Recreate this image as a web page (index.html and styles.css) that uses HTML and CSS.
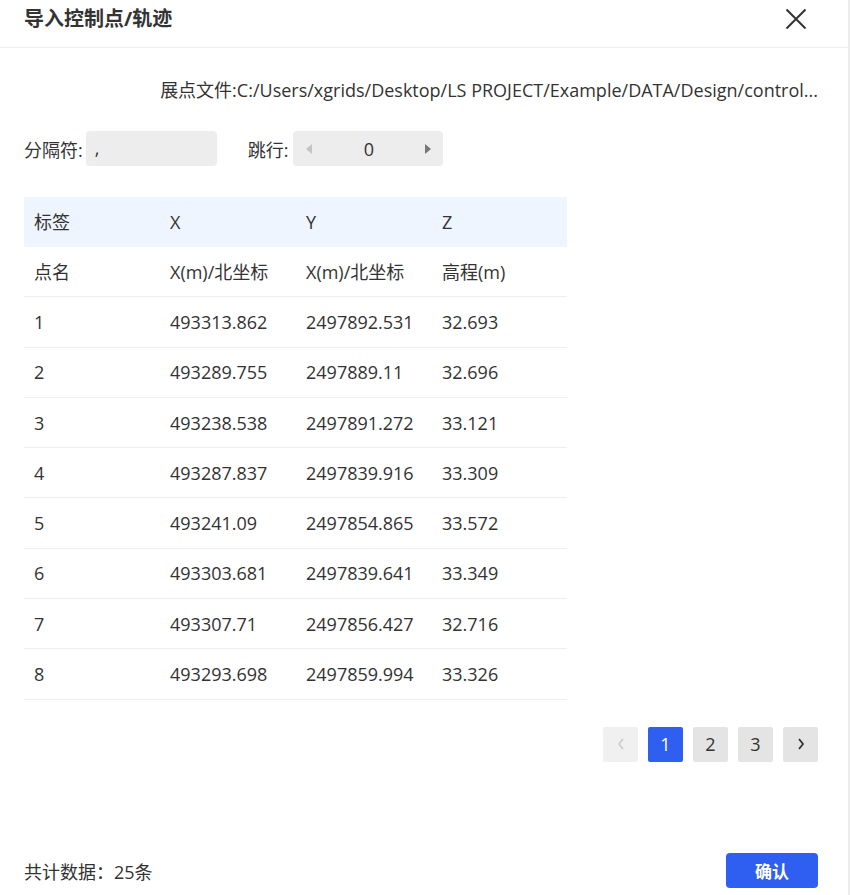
FILE: index.html
```html
<!DOCTYPE html>
<html lang="zh-CN">
<head>
    <meta charset="UTF-8">
    <title>导入控制点/轨迹</title>
    <link rel="stylesheet" href="styles.css">
</head>
<body>
<div class="dialog">
    <div class="dialog-header">
        <h1>导入控制点/轨迹</h1>
        <button type="button" class="close-btn" aria-label="关闭">
            <svg width="22" height="22" viewBox="0 0 22 22"><path d="M1.5 1.5L20.5 20.5M20.5 1.5L1.5 20.5" stroke="#333" stroke-width="2" fill="none"/></svg>
        </button>
    </div>
    <div class="dialog-body">
        <div class="file-path">展点文件:C:/Users/xgrids/Desktop/LS PROJECT/Example/DATA/Design/control...</div>
        <div class="options-row">
            <label class="field">分隔符: <span class="sep-input">,</span></label>
            <label class="field field-skip">跳行:
                <span class="stepper">
                    <span class="arrow arrow-left"></span>
                    <span class="stepper-value">0</span>
                    <span class="arrow arrow-right"></span>
                </span>
            </label>
        </div>
        <table class="data-table">
            <thead>
                <tr><th>标签</th><th>X</th><th>Y</th><th>Z</th></tr>
            </thead>
            <tbody>
                <tr><td>点名</td><td>X(m)/北坐标</td><td>X(m)/北坐标</td><td>高程(m)</td></tr>
                <tr><td>1</td><td>493313.862</td><td>2497892.531</td><td>32.693</td></tr>
                <tr><td>2</td><td>493289.755</td><td>2497889.11</td><td>32.696</td></tr>
                <tr><td>3</td><td>493238.538</td><td>2497891.272</td><td>33.121</td></tr>
                <tr><td>4</td><td>493287.837</td><td>2497839.916</td><td>33.309</td></tr>
                <tr><td>5</td><td>493241.09</td><td>2497854.865</td><td>33.572</td></tr>
                <tr><td>6</td><td>493303.681</td><td>2497839.641</td><td>33.349</td></tr>
                <tr><td>7</td><td>493307.71</td><td>2497856.427</td><td>32.716</td></tr>
                <tr><td>8</td><td>493293.698</td><td>2497859.994</td><td>33.326</td></tr>
            </tbody>
        </table>
        <div class="pager">
            <button type="button" class="page-btn disabled">
                <svg width="10" height="14" viewBox="0 0 10 14"><path d="M7 2L3 7L7 12" stroke="#c8c8c8" stroke-width="1.5" fill="none"/></svg>
            </button>
            <button type="button" class="page-btn active">1</button>
            <button type="button" class="page-btn">2</button>
            <button type="button" class="page-btn">3</button>
            <button type="button" class="page-btn">
                <svg width="10" height="14" viewBox="0 0 10 14"><path d="M3 2L7 7L3 12" stroke="#333" stroke-width="1.8" fill="none"/></svg>
            </button>
        </div>
    </div>
    <div class="dialog-footer">
        <span class="total">共计数据：25条</span>
        <button type="button" class="confirm-btn">确认</button>
    </div>
</div>
</body>
</html>
```

FILE: styles.css
```css
html, body { margin: 0; padding: 0; background: #fff; }
body { font-family: "Open Sans", "Noto Sans CJK SC", sans-serif; color: #333; font-size: 18px; }
.dialog { width: 848px; height: 895px; border-right: 2px solid #ececec; display: flex; flex-direction: column; }
.dialog-header { height: 47px; border-bottom: 1px solid #eeeeee; display: flex; align-items: flex-start; justify-content: space-between; padding: 0 41px 0 24px; }
.dialog-header h1 { margin: 5px 0 0; font-size: 20px; font-weight: bold; color: #333; line-height: 28px; }
.close-btn { background: none; border: 0; padding: 0; margin-top: 8px; cursor: pointer; }
.dialog-body { flex: 1; padding: 0 30px 0 24px; }
.file-path { text-align: right; margin-top: 28px; line-height: 28px; height: 28px; white-space: nowrap; }
.options-row { display: flex; gap: 31px; margin-top: 27px; height: 35px; }
.field { display: flex; align-items: center; gap: 3px; }
.field-skip { gap: 5px; }
.sep-input { width: 131px; height: 35px; background: #ededed; border-radius: 4px; box-sizing: border-box; padding: 0 9px; line-height: 35px; }
.stepper { width: 150px; height: 35px; background: #ededed; border-radius: 4px; display: flex; align-items: center; justify-content: space-between; padding: 0 12px 0 13px; box-sizing: border-box; }
.stepper-value { font-size: 18px; }
.arrow { width: 0; height: 0; border-top: 5px solid transparent; border-bottom: 5px solid transparent; }
.arrow-left { border-right: 6px solid #c4c4c4; }
.arrow-right { border-left: 6px solid #777; }
.data-table { margin-top: 31px; width: 543px; border-collapse: collapse; table-layout: fixed; }
.data-table th, .data-table td { text-align: left; font-weight: normal; padding: 0; height: 49.3px; border-bottom: 1px solid #eeeeee; line-height: 24px; }
.data-table th { background: #eef5ff; border-bottom: 0; height: 50px; }
.data-table th:first-child, .data-table td:first-child { width: 136px; padding-left: 10px; }
.data-table th:nth-child(2), .data-table th:nth-child(3) { width: 136px; }
.pager { display: flex; justify-content: flex-end; gap: 10px; margin-top: 27px; }
.page-btn { width: 35px; height: 35px; border: 0; border-radius: 2px; background: #e4e4e4; color: #333; font-family: inherit; font-size: 18px; padding: 0; display: flex; align-items: center; justify-content: center; cursor: pointer; }
.page-btn.disabled { background: #f0f0f0; cursor: default; }
.page-btn.active { background: #2f5ff0; color: #fff; }
.dialog-footer { display: flex; justify-content: space-between; align-items: center; padding: 0 30px 7px 24px; }
.confirm-btn { width: 92px; height: 35px; background: #2f5ff0; color: #fff; border: 0; border-radius: 4px; font-family: inherit; font-size: 17px; font-weight: bold; cursor: pointer; }
```
